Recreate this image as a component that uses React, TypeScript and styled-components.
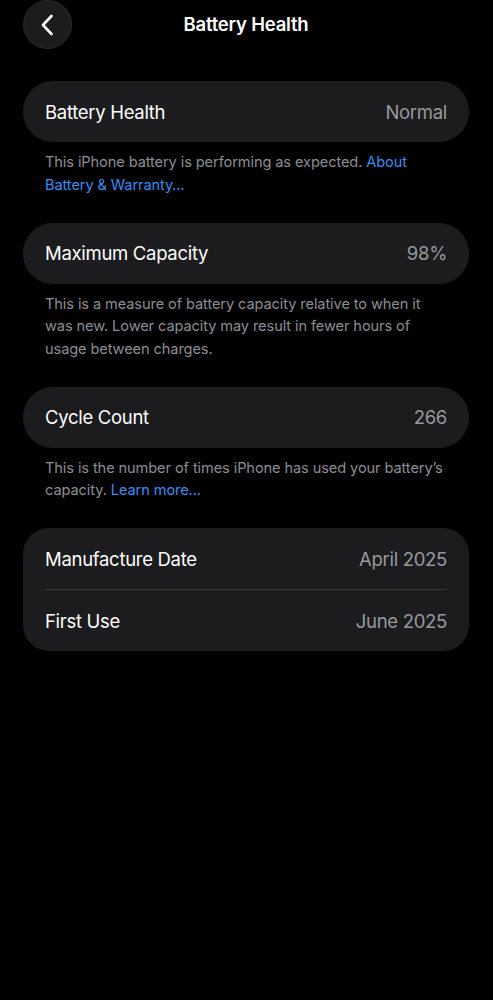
import React from "react";
import styled, {createGlobalStyle} from "styled-components";

const GlobalStyle = createGlobalStyle`
  html, body {
    margin: 0;
    padding: 0;
    background: #000;
  }

  body {
    font-family: Inter, "Noto Sans", "Liberation Sans", sans-serif;
    -webkit-font-smoothing: antialiased;
  }
`;

const Page = styled.div`
  min-height: 1000px;
  background: #000;
  padding: 0 24px 0 23px;
  box-sizing: border-box;
`;

const Header = styled.div`
  position: relative;
  height: 48px;
  display: flex;
  align-items: center;
  justify-content: center;
  margin-bottom: 33px;
`;

const BackButton = styled.button`
  position: absolute;
  left: 0;
  top: 0;
  width: 49px;
  height: 49px;
  border-radius: 50%;
  border: 1px solid #2a2a2c;
  background: #1c1c1e;
  display: flex;
  align-items: center;
  justify-content: center;
  padding: 0;
  cursor: pointer;
`;

const Title = styled.h1`
  margin: 0;
  font-size: 18.5px;
  font-weight: 600;
  color: #fff;
  letter-spacing: -0.2px;
`;

const Section = styled.section`
  margin-bottom: 26.5px;
`;

const Card = styled.div`
  background: #1c1c1e;
  border-radius: ${(p: {$multi?: boolean}) => (p.$multi ? "26px" : "30px")};
  padding: 0 22px;
`;

const Row = styled.div`
  height: 61px;
  display: flex;
  align-items: center;
  justify-content: space-between;

  & + & {
    border-top: 1px solid #38383a;
  }
`;

const Label = styled.span`
  font-size: 18.5px;
  color: #fff;
  letter-spacing: -0.3px;
`;

const Value = styled.span`
  font-size: 18.5px;
  color: #98989d;
  letter-spacing: -0.3px;
`;

const Footer = styled.p`
  margin: 0;
  padding: 9px 22px 0;
  font-size: 14.6px;
  line-height: 22.5px;
  color: #8d8d92;
  letter-spacing: -0.1px;
`;

const Link = styled.a`
  color: #3b8cf3;
  text-decoration: none;
`;

const Chevron = () => (
  <svg width="18" height="24" viewBox="0 0 18 24">
    <path
      d="M12.5 3 L4 12 L12.5 21"
      fill="none"
      stroke="#fff"
      strokeWidth="2.6"
      strokeLinecap="round"
      strokeLinejoin="round"
    />
  </svg>
);

const App: React.FC = () => {
  return (
    <>
      <GlobalStyle />
      <Page>
        <Header>
          <BackButton aria-label="Back">
            <Chevron />
          </BackButton>
          <Title>Battery Health</Title>
        </Header>

        <Section>
          <Card>
            <Row>
              <Label>Battery Health</Label>
              <Value>Normal</Value>
            </Row>
          </Card>
          <Footer>
            This iPhone battery is performing as expected.{" "}
            <Link href="#">About Battery &amp; Warranty…</Link>
          </Footer>
        </Section>

        <Section>
          <Card>
            <Row>
              <Label>Maximum Capacity</Label>
              <Value>98%</Value>
            </Row>
          </Card>
          <Footer>
            This is a measure of battery capacity relative to when it was new.
            Lower capacity may result in fewer hours of usage between charges.
          </Footer>
        </Section>

        <Section>
          <Card>
            <Row>
              <Label>Cycle Count</Label>
              <Value>266</Value>
            </Row>
          </Card>
          <Footer>
            This is the number of times iPhone has used your battery’s
            capacity. <Link href="#">Learn more…</Link>
          </Footer>
        </Section>

        <Section>
          <Card $multi>
            <Row>
              <Label>Manufacture Date</Label>
              <Value>April 2025</Value>
            </Row>
            <Row>
              <Label>First Use</Label>
              <Value>June 2025</Value>
            </Row>
          </Card>
        </Section>
      </Page>
    </>
  );
};

export default App;
